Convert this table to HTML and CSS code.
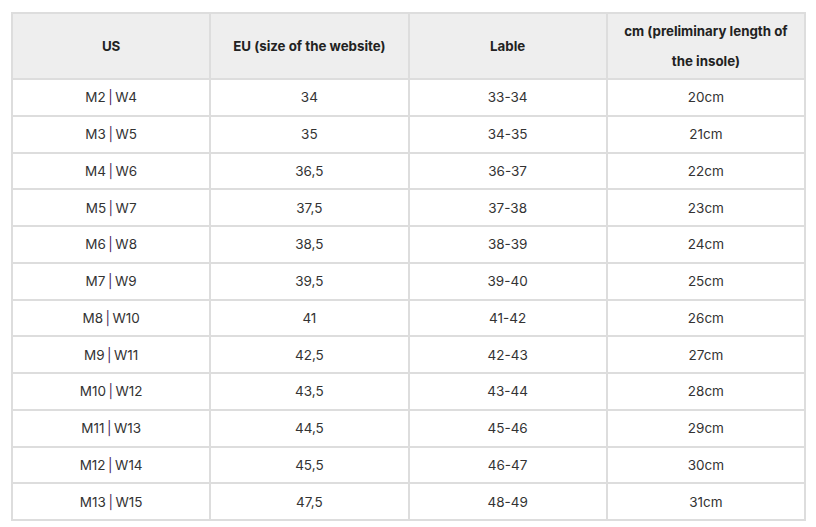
FILE: index.html
```html
<!DOCTYPE html>
<html>
<head>
<meta charset="utf-8">
<link rel="stylesheet" href="styles.css">
</head>
<body>
<table class="size-table">
  <thead>
    <tr>
      <th>US</th>
      <th>EU (size of the website)</th>
      <th>Lable</th>
      <th>cm (preliminary length of the insole)</th>
    </tr>
  </thead>
  <tbody>
    <tr><td>M2<span class="sep">|</span>W4</td><td>34</td><td>33-34</td><td>20cm</td></tr>
    <tr><td>M3<span class="sep">|</span>W5</td><td>35</td><td>34-35</td><td>21cm</td></tr>
    <tr><td>M4<span class="sep">|</span>W6</td><td>36,5</td><td>36-37</td><td>22cm</td></tr>
    <tr><td>M5<span class="sep">|</span>W7</td><td>37,5</td><td>37-38</td><td>23cm</td></tr>
    <tr><td>M6<span class="sep">|</span>W8</td><td>38,5</td><td>38-39</td><td>24cm</td></tr>
    <tr><td>M7<span class="sep">|</span>W9</td><td>39,5</td><td>39-40</td><td>25cm</td></tr>
    <tr><td>M8<span class="sep">|</span>W10</td><td>41</td><td>41-42</td><td>26cm</td></tr>
    <tr><td>M9<span class="sep">|</span>W11</td><td>42,5</td><td>42-43</td><td>27cm</td></tr>
    <tr><td>M10<span class="sep">|</span>W12</td><td>43,5</td><td>43-44</td><td>28cm</td></tr>
    <tr><td>M11<span class="sep">|</span>W13</td><td>44,5</td><td>45-46</td><td>29cm</td></tr>
    <tr><td>M12<span class="sep">|</span>W14</td><td>45,5</td><td>46-47</td><td>30cm</td></tr>
    <tr><td>M13<span class="sep">|</span>W15</td><td>47,5</td><td>48-49</td><td>31cm</td></tr>
  </tbody>
</table>
</body>
</html>
```
FILE: styles.css
```css
html, body {
  margin: 0;
  padding: 0;
  background: #ffffff;
}
body {
  padding: 12px 10px 0 11px;
  font-family: "Inter", "Roboto", sans-serif;
  color: #333333;
}
.size-table {
  width: 795px;
  border-collapse: collapse;
  table-layout: fixed;
  border: 2px solid #dddddd;
}
.size-table th,
.size-table td {
  border: 2px solid #dddddd;
  text-align: center;
  vertical-align: middle;
  padding: 0 14px;
}
.size-table th {
  background: #eeeeee;
  font-size: 13.3px;
  font-weight: 700;
  line-height: 30px;
  height: 64px;
  color: #222222;
}
.size-table td {
  font-size: 13.5px;
  font-weight: 400;
  height: 34.75px;
  line-height: 20px;
}
.sep {
  color: #4a2a5c;
  margin: 0 2.5px;
}
```
